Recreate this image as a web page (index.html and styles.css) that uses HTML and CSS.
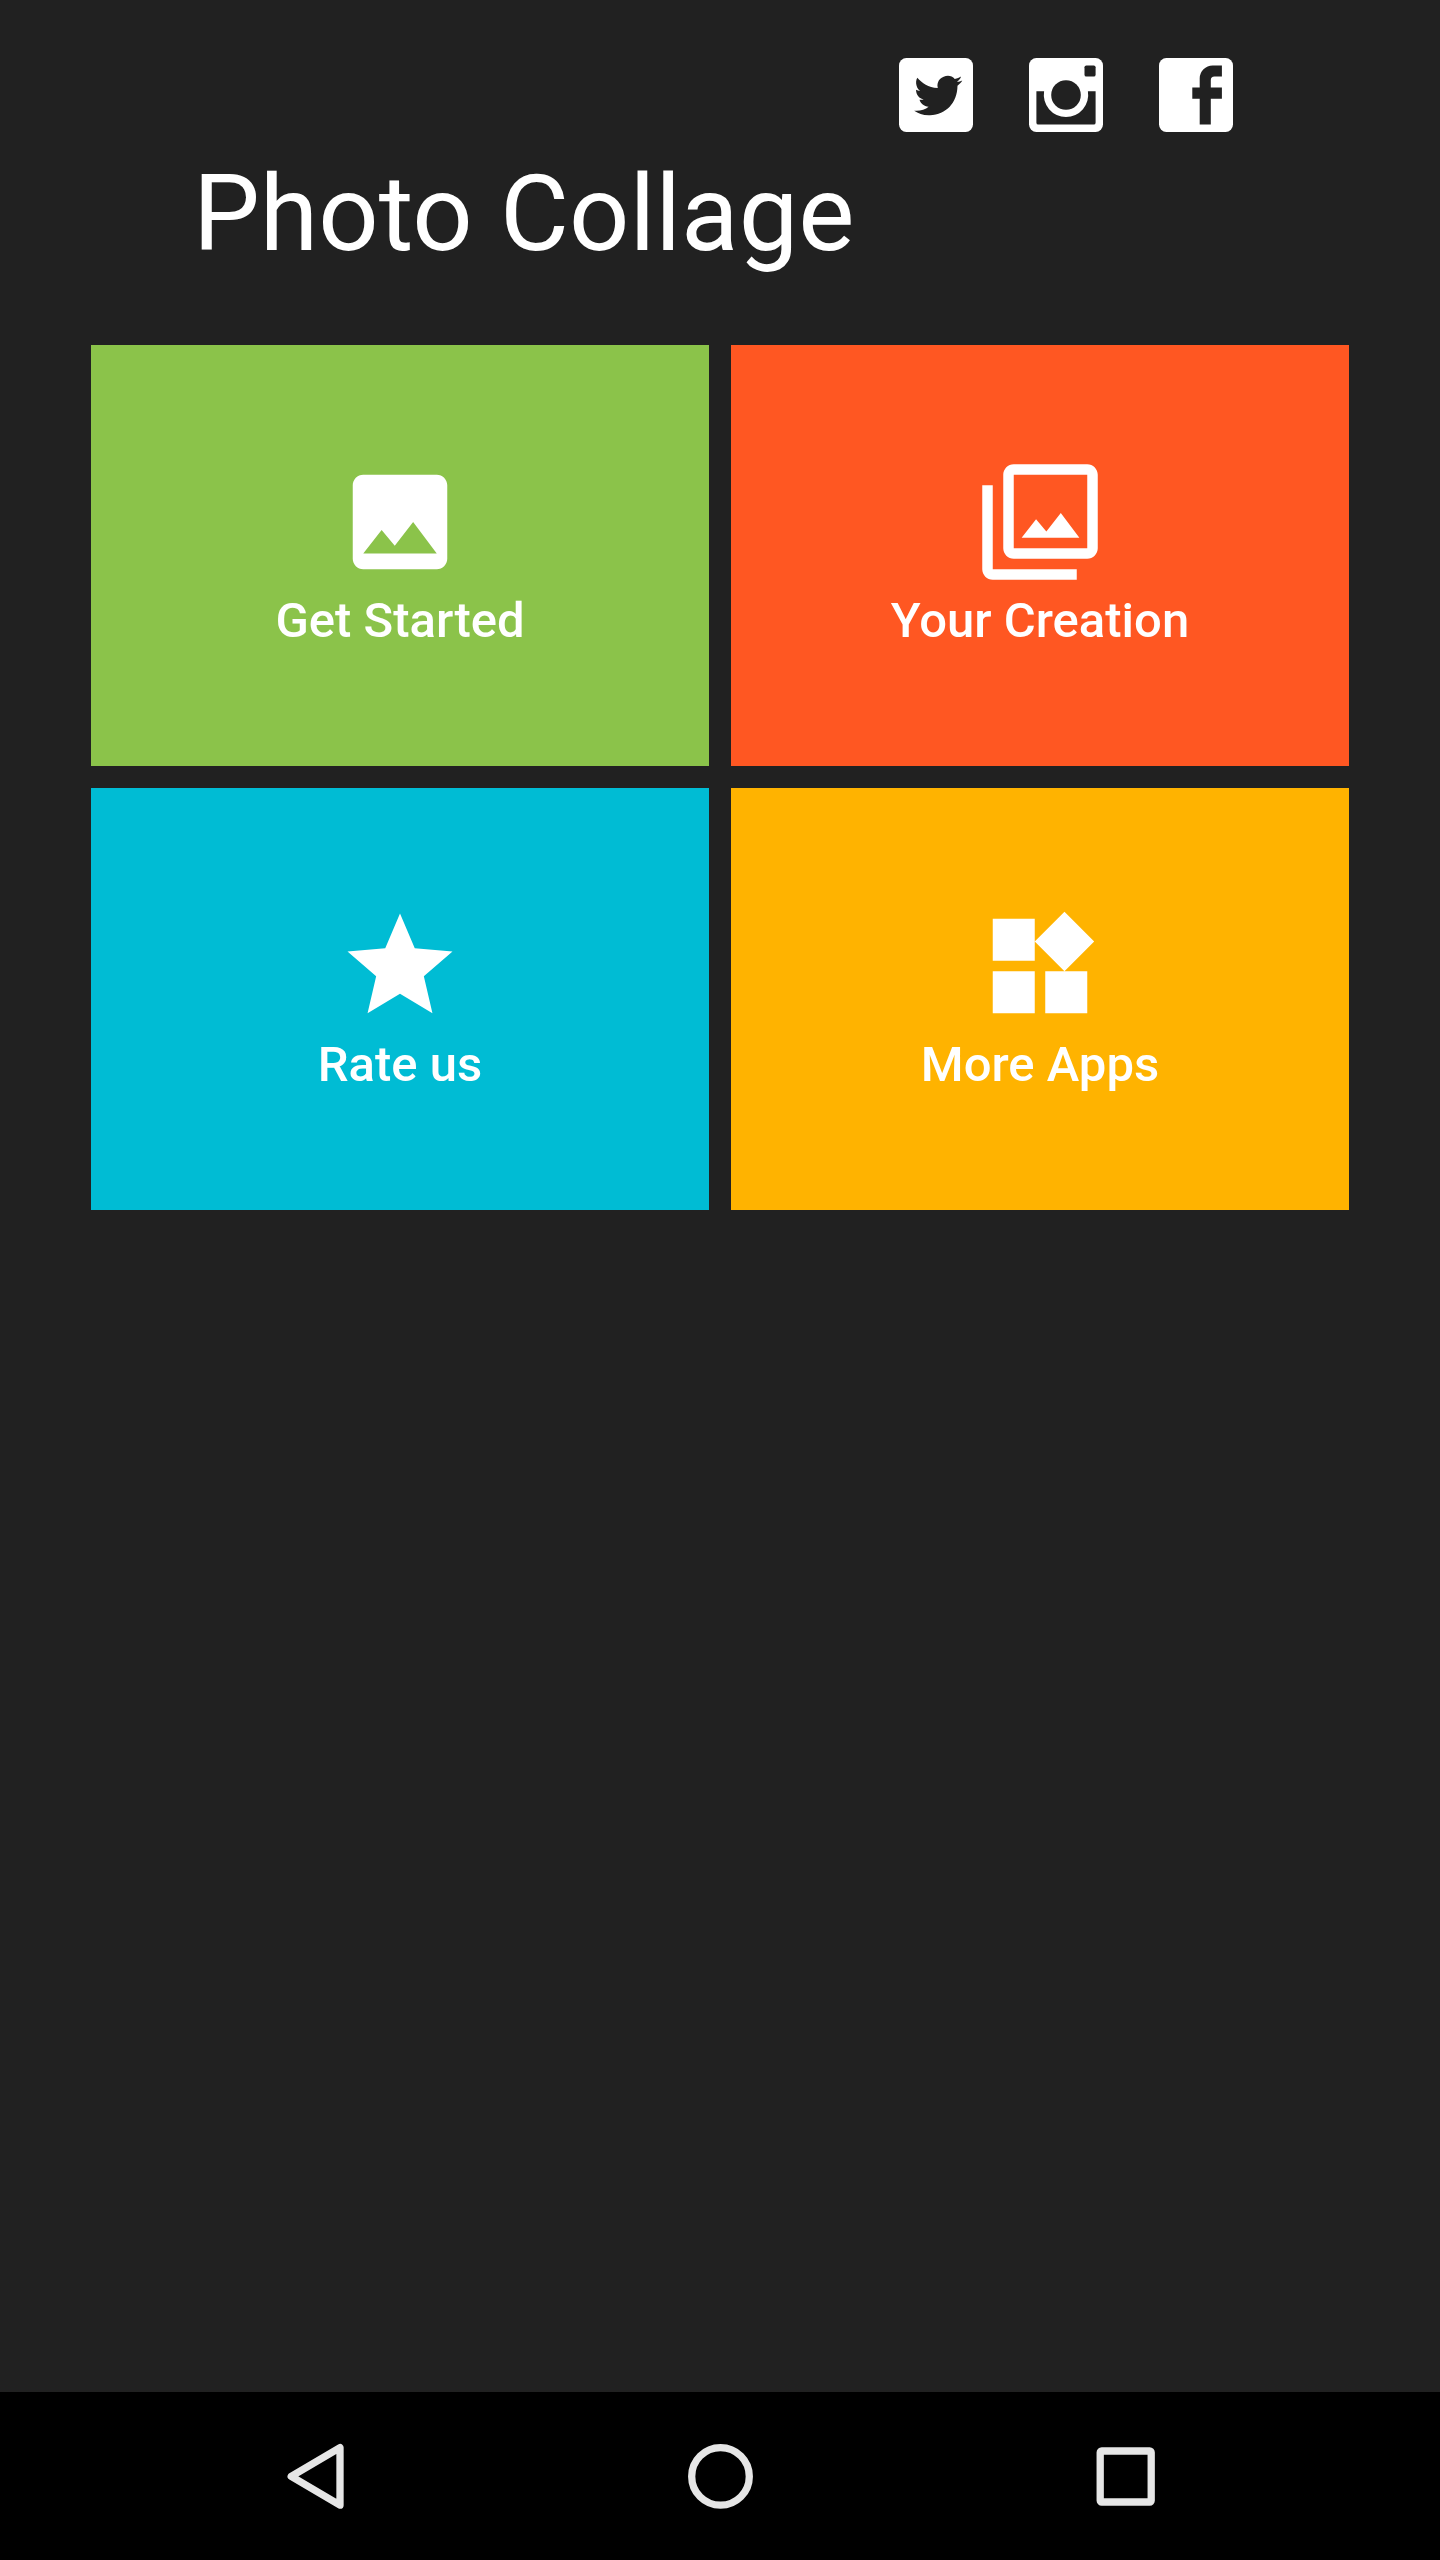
FILE: index.html
```html
<!DOCTYPE html>
<html lang="en">
<head>
    <meta charset="UTF-8">
    <meta name="viewport" content="width=device-width, initial-scale=1.0">
    <title>Photo Collage</title>
    <link rel="stylesheet" href="styles.css">
</head>
<body>
    <div class="screen">
        <header class="header">
            <div class="social-links">
                <!-- Twitter -->
                <svg class="social-icon" viewBox="0 0 20 20">
                    <rect width="20" height="20" rx="2" fill="#fff"/>
                    <path transform="translate(-1.9 -1.85)" fill="#212121" d="M17.71 9.33C17.64 13.95 14.69 17.11 10.28 17.31C8.46 17.39 7.15 16.81 6 16.08C7.34 16.29 9 15.76 9.9 15C8.58 14.86 7.81 14.19 7.44 13.12C7.82 13.18 8.22 13.16 8.58 13.09C7.39 12.69 6.54 11.95 6.5 10.41C6.83 10.57 7.18 10.71 7.64 10.74C6.75 10.23 6.1 8.38 6.85 7.16C8.17 8.61 9.76 9.79 12.37 9.95C11.71 7.15 15.42 5.63 16.97 7.5C17.63 7.38 18.16 7.14 18.68 6.86C18.47 7.5 18.06 7.97 17.56 8.33C18.1 8.26 18.59 8.13 19 7.92C18.75 8.45 18.19 8.93 17.71 9.33z"/>
                </svg>
                <!-- Instagram -->
                <svg class="social-icon" viewBox="0 0 20 20">
                    <rect width="20" height="20" rx="2" fill="#fff"/>
                    <rect x="15" y="2" width="3" height="3" rx="0.5" fill="#212121"/>
                    <path fill="#212121" d="M2 9h2.08a6 6 0 1 0 11.84 0H18v8.5a.5.5 0 0 1-.5.5h-15a.5.5 0 0 1-.5-.5z"/>
                    <circle cx="10" cy="10" r="4" fill="#212121"/>
                </svg>
                <!-- Facebook -->
                <svg class="social-icon" viewBox="0 0 20 20">
                    <rect width="20" height="20" rx="2" fill="#fff"/>
                    <path fill="#212121" d="M17 2h-2.5A3.5 3.5 0 0 0 11 5.5V8H9v3h2v7h3v-7h3V8h-3V6a1 1 0 0 1 1-1h2z"/>
                </svg>
            </div>
            <h1>Photo Collage</h1>
        </header>

        <main class="menu">
            <div class="menu-item green">
                <svg class="menu-icon" viewBox="0 0 24 24"><path d="M21 19V5c0-1.1-.9-2-2-2H5c-1.1 0-2 .9-2 2v14c0 1.1.9 2 2 2h14c1.1 0 2-.9 2-2zM8.5 13.5l2.5 3.01L14.5 12l4.5 6H5l3.5-4.5z"/></svg>
                <span>Get Started</span>
            </div>
            <div class="menu-item orange">
                <svg class="menu-icon" viewBox="0 0 24 24"><path d="M15.96 10.29l-2.75 3.54-1.96-2.36L8.5 15h11l-3.54-4.71zM3 5H1v16c0 1.1.9 2 2 2h16v-2H3V5zm18-4H7c-1.1 0-2 .9-2 2v14c0 1.1.9 2 2 2h14c1.1 0 2-.9 2-2V3c0-1.1-.9-2-2-2zm0 16H7V3h14v14z"/></svg>
                <span>Your Creation</span>
            </div>
            <div class="menu-item cyan">
                <svg class="menu-icon" viewBox="0 0 24 24"><path d="M12 17.27L18.18 21l-1.64-7.03L22 9.24l-7.19-.61L12 2 9.19 8.63 2 9.24l5.46 4.73L5.82 21z"/></svg>
                <span>Rate us</span>
            </div>
            <div class="menu-item amber">
                <svg class="menu-icon" viewBox="0 0 24 24"><path d="M13 13v8h8v-8h-8zM3 21h8v-8H3v8zM3 3v8h8V3H3zm13.66-1.31L11 7.34 16.66 13l5.66-5.66-5.66-5.65z"/></svg>
                <span>More Apps</span>
            </div>
        </main>

        <nav class="nav-bar">
            <svg class="nav-icon" viewBox="0 0 70 70"><path d="M60 6.6v57.6L11.2 35.4z"/></svg>
            <svg class="nav-icon" viewBox="0 0 70 70"><circle cx="35.5" cy="35.4" r="28.8"/></svg>
            <svg class="nav-icon" viewBox="0 0 70 70"><rect x="10.2" y="10" width="51" height="51" rx="1.5"/></svg>
        </nav>
    </div>
</body>
</html>
```

FILE: styles.css
```css
* {
    box-sizing: border-box;
}

body {
    margin: 0;
    background-color: #212121;
    color: #fff;
    font-family: Roboto, sans-serif;
}

.screen {
    display: flex;
    flex-direction: column;
    height: 2560px;
}

.header {
    height: 345px;
    padding: 58px 207px 0 193px;
}

.social-links {
    display: flex;
    justify-content: flex-end;
    gap: 56px;
}

.social-icon {
    display: block;
    width: 74px;
    height: 74px;
}

h1 {
    margin: 20px 0 0;
    font-size: 106px;
    font-weight: 400;
    line-height: 124px;
    word-spacing: 1px;
    white-space: nowrap;
}

.menu {
    display: grid;
    grid-template-columns: 1fr 1fr;
    grid-template-rows: 421px 422px;
    gap: 22px;
    padding: 0 91px;
    flex: 1;
}

.menu-item {
    display: flex;
    flex-direction: column;
    align-items: center;
    padding-top: 114px;
    font-size: 49px;
    font-weight: 500;
    line-height: 57px;
}

.menu-icon {
    width: 126px;
    height: 126px;
    fill: #fff;
}

.menu-item span {
    margin-top: 7px;
}

.green {
    background-color: #8bc34a;
}

.orange {
    background-color: #ff5722;
}

.cyan {
    background-color: #00bcd4;
}

.amber {
    background-color: #ffb300;
}

.cyan,
.amber {
    padding-top: 115px;
}

.nav-bar {
    display: flex;
    align-items: center;
    justify-content: space-between;
    height: 168px;
    padding: 0 280px;
    background-color: #000;
}

.nav-icon {
    width: 70px;
    height: 70px;
    fill: none;
    stroke: #e6e6e6;
    stroke-width: 7.3;
    stroke-linejoin: round;
}
```
